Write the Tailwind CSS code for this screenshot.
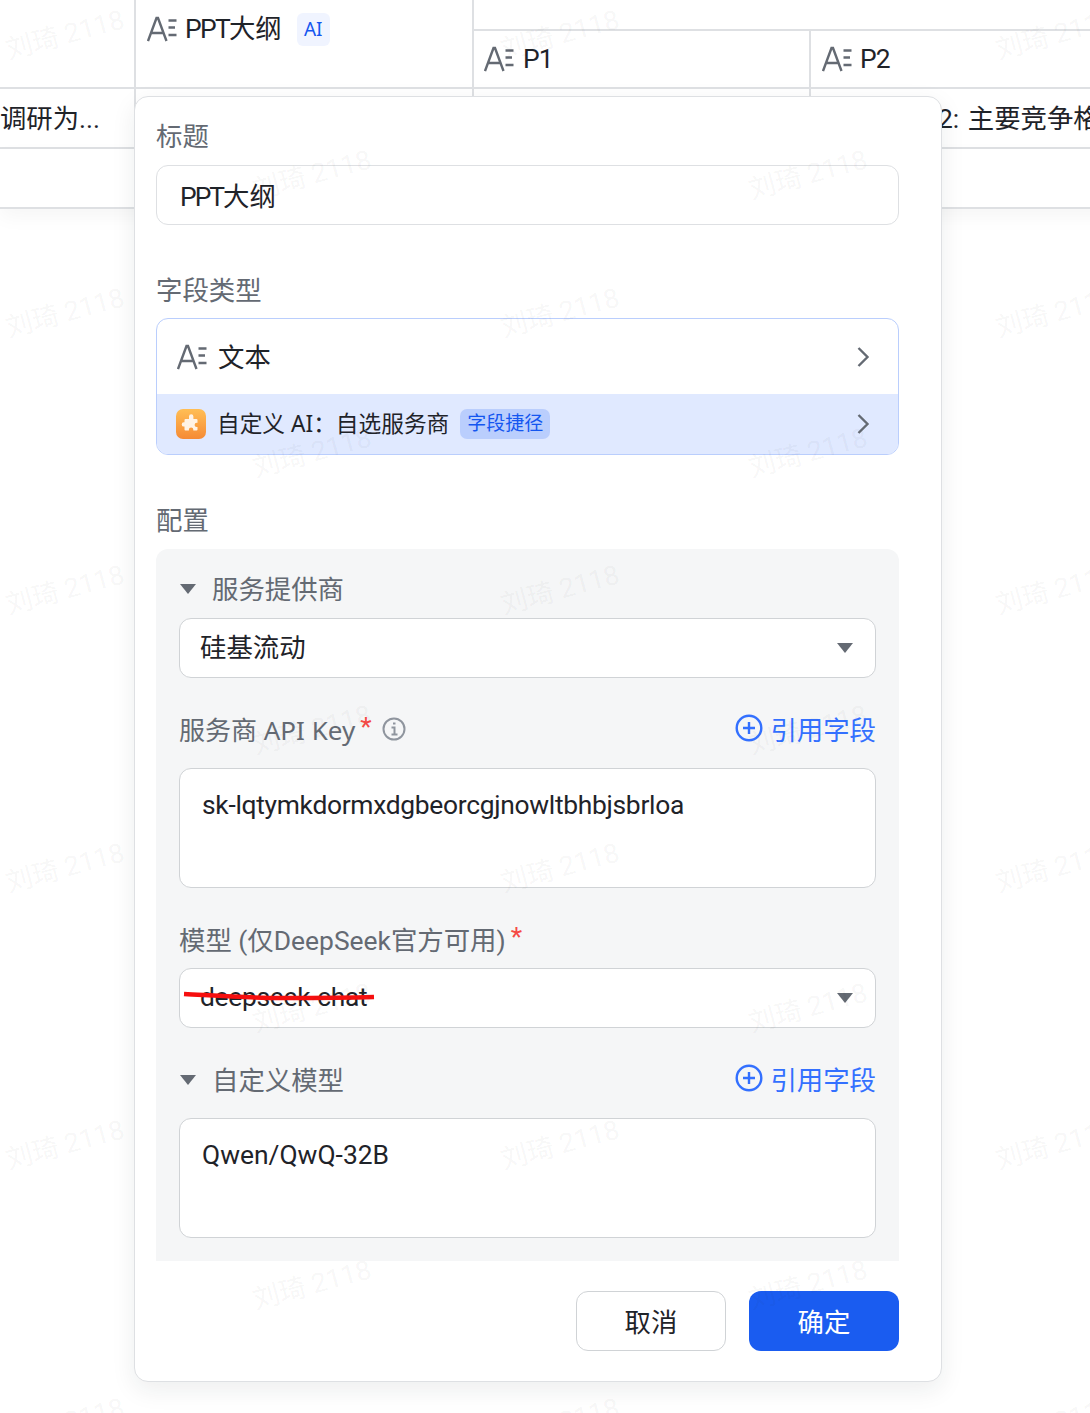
<!DOCTYPE html>
<html lang="zh-CN">
<head>
    <meta charset="UTF-8">
    <title>字段配置</title>
    <script src="https://cdn.jsdelivr.net/npm/@tailwindcss/browser@4"></script>
</head>
<body class="bg-white">
<div id="page" class="relative w-[1090px] h-[1413px] overflow-hidden bg-white text-[#1f2329] text-[26.4px] font-['Roboto','Noto_Sans_CJK_SC',sans-serif]">

    <!-- Table behind the panel -->
    <div class="w-[1300px]">
        <div class="flex h-[89px] border-b-2 border-[#dee0e3]">
            <div class="w-[134px] shrink-0"></div>
            <div class="w-[340px] shrink-0 border-x-2 border-[#dee0e3] pl-[11px] pt-[13px]">
                <div class="flex items-center h-[32px]">
                    <svg class="w-[30px] h-[26px] shrink-0" viewBox="0 0 30 26" fill="none" stroke="#646a73" stroke-width="2.4"><path d="M1 25 L9.500 2 L11 2 L19.500 25 M4.500 17 L16 17"/><path d="M21.500 4.500h8M21.500 11.500h6.500M21.500 19h8"/></svg>
                    <span class="ml-[8px] pt-[2px]"><span class="tracking-[-1.700px]">PPT</span>大纲</span>
                    <span class="ml-[15px] w-[33px] h-[33px] rounded-md bg-[#f0f4ff] text-[#1456f0] text-[19px] flex items-center justify-center font-['Noto_Sans',sans-serif]">AI</span>
                </div>
            </div>
            <div class="flex-1 flex flex-col">
                <div class="h-[31px] border-b-2 border-[#dee0e3]"></div>
                <div class="flex flex-1">
                    <div class="w-[337px] shrink-0 border-r-2 border-[#dee0e3] pl-[10px] flex items-center">
                        <svg class="w-[30px] h-[26px] shrink-0" viewBox="0 0 30 26" fill="none" stroke="#646a73" stroke-width="2.4"><path d="M1 25 L9.500 2 L11 2 L19.500 25 M4.500 17 L16 17"/><path d="M21.500 4.500h8M21.500 11.500h6.500M21.500 19h8"/></svg>
                        <span class="ml-[9px] pt-[2px] tracking-[-1px]">P1</span>
                    </div>
                    <div class="flex-1 pl-[11px] flex items-center">
                        <svg class="w-[30px] h-[26px] shrink-0" viewBox="0 0 30 26" fill="none" stroke="#646a73" stroke-width="2.4"><path d="M1 25 L9.500 2 L11 2 L19.500 25 M4.500 17 L16 17"/><path d="M21.500 4.500h8M21.500 11.500h6.500M21.500 19h8"/></svg>
                        <span class="ml-[8px] pt-[2px] tracking-[-1px]">P2</span>
                    </div>
                </div>
            </div>
        </div>
        <div class="flex h-[60px] border-b-2 border-[#dee0e3] items-center">
            <div class="w-[134px] shrink-0 overflow-hidden whitespace-nowrap flex justify-end pr-[34px] pt-[4px]">调研为...</div>
            <div class="w-[340px] shrink-0 h-full border-x-2 border-[#dee0e3]"></div>
            <div class="w-[337px] shrink-0 h-full border-r-2 border-[#dee0e3]"></div>
            <div class="pl-[127px] whitespace-nowrap pt-[4px]">2: <span class="ml-[2px]">主要竞争格局</span></div>
        </div>
        <div class="h-[60px] border-b-2 border-[#dee0e3] shadow-[0_8px_20px_rgba(0,0,0,0.04)]"></div>
    </div>

    <!-- Field config panel -->
    <div class="absolute left-[134px] top-[96px] w-[808px] h-[1286px] bg-white border border-[#dee0e3] rounded-[14px] shadow-[0_8px_24px_rgba(31,35,41,0.08)] pl-[21px] pr-[42px] pt-[19px]">
        <div class="h-[40px] leading-[42px] text-[#646a73] mb-[9px]">标题</div>
        <div class="h-[60px] border border-[#dee0e3] rounded-[12px] pl-[23px] flex items-center"><span class="pt-[6px]"><span class="tracking-[-2px]">PPT</span>大纲</span></div>

        <div class="h-[40px] leading-[42px] text-[#646a73] mt-[45px] mb-[8px]">字段类型</div>
        <div class="border border-[#bacefd] rounded-[12px] overflow-hidden">
            <div class="h-[75px] flex items-center pl-[20px] pr-[28px]">
                <svg class="w-[30px] h-[26px] shrink-0" viewBox="0 0 30 26" fill="none" stroke="#646a73" stroke-width="2.4"><path d="M1 25 L9.500 2 L11 2 L19.500 25 M4.500 17 L16 17"/><path d="M21.500 4.500h8M21.500 11.500h6.500M21.500 19h8"/></svg>
                <span class="ml-[11px] pt-[4px]">文本</span>
                <svg class="ml-auto w-[14px] h-[22px]" viewBox="0 0 14 22" fill="none" stroke="#646a73" stroke-width="2.4"><path d="M2.500 2 L11.500 11 L2.500 20"/></svg>
            </div>
            <div class="h-[60px] bg-[#e0e9ff] flex items-center pl-[19px] pr-[28px]">
                <div class="w-[30px] h-[30px] rounded-[7px] bg-gradient-to-b from-[#ffbe55] to-[#f58a35] flex items-center justify-center shrink-0">
                    <svg class="w-[20px] h-[20px]" viewBox="0 0 20 20" fill="#fff3e6"><path d="M8 2.500a2.200 2.200 0 0 1 4.400 0V5h3.100a1 1 0 0 1 1 1v2.800h-.8a2.100 2.100 0 0 0 0 4.200h.8v2.500a1 1 0 0 1-1 1h-3.200v-.9a2.200 2.200 0 0 0-4.400 0v.9H4.500a1 1 0 0 1-1-1v-2.900h-.6a2.200 2.200 0 0 1 0-4.400h.6V6a1 1 0 0 1 1-1H8z"/></svg>
                </div>
                <span class="ml-[11px] text-[22.700px] whitespace-nowrap font-['Noto_Sans','Noto_Sans_CJK_SC',sans-serif]">自定义 AI：自选服务商</span>
                <span class="ml-[11px] h-[30px] w-[90px] rounded-[7px] bg-[#bacefd] text-[#1456f0] text-[19px] flex items-center justify-center whitespace-nowrap">字段捷径</span>
                <svg class="ml-auto w-[14px] h-[22px]" viewBox="0 0 14 22" fill="none" stroke="#646a73" stroke-width="2.4"><path d="M2.500 2 L11.500 11 L2.500 20"/></svg>
            </div>
        </div>

        <div class="h-[40px] leading-[42px] text-[#646a73] mt-[45px] mb-[9px]">配置</div>
        <div class="bg-[#f5f6f7] rounded-t-[12px] px-[23px] pt-[20px] pb-[23px]">
            <div class="h-[40px] flex items-center text-[#646a73] mb-[9px]">
                <svg class="w-[16px] h-[10px] ml-[1px]" viewBox="0 0 16 10" fill="#646a73"><path d="M0 0h16L8 10z"/></svg>
                <span class="ml-[16px] pt-[4px]">服务提供商</span>
            </div>
            <div class="h-[60px] bg-white border border-[#d0d3d6] rounded-[12px] pl-[20px] pr-[22px] flex items-center justify-between">
                <span class="pt-[2px]">硅基流动</span>
                <svg class="w-[16px] h-[10px]" viewBox="0 0 16 10" fill="#646a73"><path d="M0 0h16L8 10z"/></svg>
            </div>

            <div class="h-[40px] flex items-center text-[#646a73] mt-[32px] mb-[18px]">
                <span class="font-['Noto_Sans','Noto_Sans_CJK_SC',sans-serif] text-[26px]">服务商 API Key</span>
                <span class="text-[#f54a45] ml-[5px] -mt-[4px]">*</span>
                <svg class="ml-[10px] w-[24px] h-[24px] -mt-[2px]" viewBox="0 0 24 24" fill="none" stroke="#8f959e" stroke-width="2"><circle cx="12" cy="12" r="10.500"/><path d="M9.500 10.500H12.500V17.500M9.500 17.500h6"/><path d="M11 6.500h2.500"/></svg>
                <span class="ml-auto flex items-center text-[#3370ff]">
                    <svg class="w-[28px] h-[28px] mr-[7px] -mt-[4px]" viewBox="0 0 28 28" fill="none" stroke="#3370ff" stroke-width="2.400"><circle cx="14" cy="14" r="12.300"/><path d="M14 8v12M8 14h12"/></svg><span class="pt-[4px]">引用字段</span>
                </span>
            </div>
            <div class="h-[120px] bg-white border border-[#d0d3d6] rounded-[12px] pl-[22px] pt-[18px] leading-[36px] whitespace-nowrap tracking-[-0.300px]">sk-lqtymkdormxdgbeorcgjnowltbhbjsbrloa</div>

            <div class="h-[40px] flex items-center text-[#646a73] mt-[32px] mb-[8px] whitespace-nowrap">
                <span class="pt-[4px]">模型 (仅DeepSeek官方可用)</span>
                <span class="text-[#f54a45] ml-[5px] -mt-[4px]">*</span>
            </div>
            <div class="relative h-[60px] bg-white border border-[#d0d3d6] rounded-[12px] pl-[20px] pr-[22px] flex items-center justify-between">
                <span class="tracking-[-0.300px]">deepseek-chat</span>
                <svg class="w-[16px] h-[10px]" viewBox="0 0 16 10" fill="#646a73"><path d="M0 0h16L8 10z"/></svg>
                <svg class="absolute left-[2px] top-[21px] w-[194px] h-[12px]" viewBox="0 0 194 12" fill="none" stroke="#f60f0f" stroke-width="4.500"><path d="M2 4 C 40 6, 70 8, 100 8 S 160 8, 192 7"/></svg>
            </div>

            <div class="h-[40px] flex items-center text-[#646a73] mt-[32px] mb-[18px]">
                <svg class="w-[16px] h-[10px] ml-[1px]" viewBox="0 0 16 10" fill="#646a73"><path d="M0 0h16L8 10z"/></svg>
                <span class="ml-[16px] pt-[4px]">自定义模型</span>
                <span class="ml-auto flex items-center text-[#3370ff]">
                    <svg class="w-[28px] h-[28px] mr-[7px] -mt-[4px]" viewBox="0 0 28 28" fill="none" stroke="#3370ff" stroke-width="2.400"><circle cx="14" cy="14" r="12.300"/><path d="M14 8v12M8 14h12"/></svg><span class="pt-[4px]">引用字段</span>
                </span>
            </div>
            <div class="h-[120px] bg-white border border-[#d0d3d6] rounded-[12px] pl-[22px] pt-[18px] leading-[36px]">Qwen/QwQ-32B</div>
        </div>

        <div class="flex justify-end gap-[23px] mt-[30px]">
            <button class="w-[150px] h-[60px] bg-white border border-[#d0d3d6] rounded-[12px] pt-[6px]">取消</button>
            <button class="w-[150px] h-[60px] bg-[#1a5cf0] text-white rounded-[12px] pt-[6px]">确定</button>
        </div>
    </div>

    <!-- Watermark layer -->
    <div id="watermarks" class="absolute inset-0 pointer-events-none"></div>
</div>

<script>
    // Watermark grid, two offset sets of rows
    const wm = document.getElementById('watermarks');
    const spots = [];
    for (let row = 0; row < 6; row++) {
        for (const x of [65, 560, 1055]) spots.push([x, 35 + row * 277.5]);
    }
    for (let row = 0; row < 5; row++) {
        for (const x of [312, 808]) spots.push([x, 175 + row * 277.5]);
    }
    spots.forEach(([x, y]) => {
        const el = document.createElement('span');
        el.className = 'absolute whitespace-nowrap text-[27px] text-[#1f2329]/5 -rotate-[15deg] -translate-x-1/2 -translate-y-1/2';
        el.style.left = x + 'px';
        el.style.top = y + 'px';
        el.textContent = '刘琦 2118';
        wm.appendChild(el);
    });
</script>
</body>
</html>
